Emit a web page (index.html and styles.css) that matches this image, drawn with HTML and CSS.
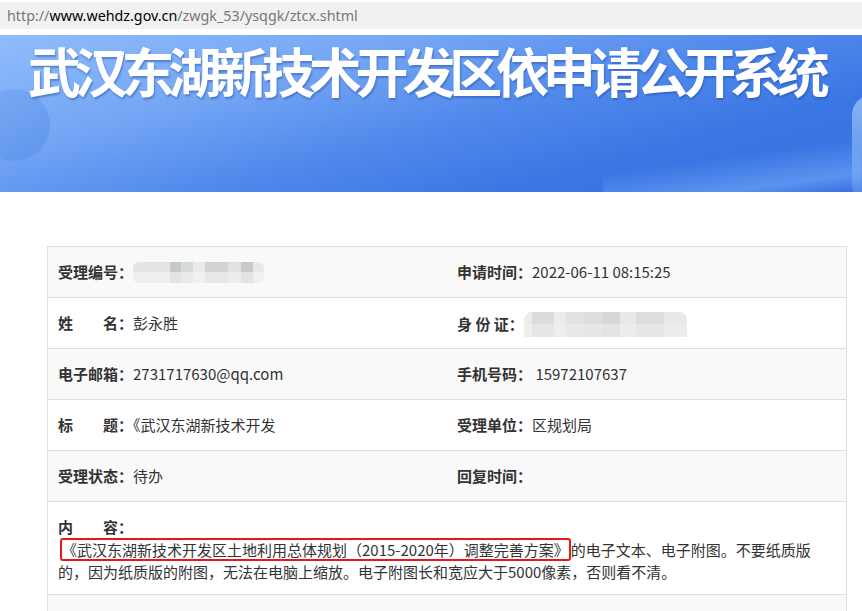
FILE: index.html
```html
<!DOCTYPE html>
<html lang="zh-CN">
<head>
    <meta charset="UTF-8">
    <meta name="viewport" content="width=device-width, initial-scale=1.0">
    <title>依申请公开查询</title>
    <link rel="stylesheet" href="styles.css">
</head>
<body>
    <div class="addr">
        <span class="dim">http://</span>www.wehdz.gov.cn<span class="dim">/zwgk_53/ysqgk/ztcx.shtml</span>
    </div>

    <div class="banner">
        <span class="circle"></span>
        <span class="bubble"></span>
        <h1>武汉东湖新技术开发区依申请公开系统</h1>
    </div>

    <div class="detail">
        <div class="row">
            <div class="cell"><b>受理编号：</b><span class="mosaic m1"></span></div>
            <div class="cell"><b>申请时间：</b>2022-06-11 08:15:25</div>
        </div>
        <div class="row">
            <div class="cell"><b>姓　　名：</b>彭永胜</div>
            <div class="cell"><b>身 份 证：</b><span class="mosaic m2"></span></div>
        </div>
        <div class="row">
            <div class="cell"><b>电子邮箱：</b>2731717630@qq.com</div>
            <div class="cell"><b>手机号码：</b> 15972107637</div>
        </div>
        <div class="row">
            <div class="cell"><b>标　　题：</b>《武汉东湖新技术开发</div>
            <div class="cell"><b>受理单位：</b>区规划局</div>
        </div>
        <div class="row">
            <div class="cell"><b>受理状态：</b>待办</div>
            <div class="cell"><b>回复时间：</b></div>
        </div>
        <div class="row content">
            <div class="cell">
                <b>内　　容：</b><br>
                <span class="mark">《武汉东湖新技术开发区土地利用总体规划（2015-2020年）调整完善方案》</span>的电子文本、电子附图。不要纸质版的，因为纸质版的附图，无法在电脑上缩放。电子附图长和宽应大于5000像素，否则看不清。
            </div>
        </div>
        <div class="row"></div>
    </div>
</body>
</html>
```

FILE: styles.css
```css
body {
    margin: 0;
    font-family: "Noto Sans CJK SC", "Microsoft YaHei", sans-serif;
    font-size: 15px;
    color: #333;
    background-color: white;
}
.addr {
    margin-top: 2px;
    height: 27px;
    line-height: 27px;
    padding-left: 7px;
    background-color: #f1f1f1;
    font-family: "Noto Sans", "Open Sans", sans-serif;
    font-size: 14.3px;
    color: #000;
    white-space: nowrap;
}
.addr .dim {
    color: #777;
}
.banner {
    position: relative;
    overflow: hidden;
    margin-top: 6px;
    height: 157px;
    background:
        linear-gradient(172deg, rgba(255,255,255,0) 72%, rgba(130,180,255,0.5) 90%, rgba(255,255,255,0) 100%) right bottom / 30% 100% no-repeat,
        linear-gradient(165deg, #8fbcfb 0%, #74a6f5 30%, #4f88eb 55%, #3b77e4 75%, #3470df 100%);
}
.banner .circle {
    position: absolute;
    left: -22px;
    top: 54px;
    width: 72px;
    height: 72px;
    border-radius: 50%;
    background: linear-gradient(150deg, #79a9f3, #5e94ec);
    opacity: 0.9;
}
.banner .bubble {
    position: absolute;
    right: -30px;
    top: 60px;
    width: 40px;
    height: 110px;
    border-radius: 20px;
    background: linear-gradient(180deg, rgba(170,205,255,0.7), rgba(120,170,245,0.3));
}
.banner h1 {
    position: relative;
    margin: 0;
    padding: 8px 0 0 28px;
    font-size: 53px;
    line-height: 55px;
    letter-spacing: -6.2px;
    font-weight: 700;
    color: white;
    white-space: nowrap;
    text-shadow: 1px 2px 2px rgba(30, 70, 160, 0.45);
}
.detail {
    margin: 54px 0 0 47px;
    width: 798px;
    border: 1px solid #ddd;
    border-bottom: none;
}
.detail .row {
    display: flex;
    height: 50px;
    border-top: 1px solid #ddd;
}
.detail .row:first-child {
    border-top: none;
}
.detail .row:nth-child(odd) {
    background-color: #f9f9f9;
}
.detail .cell {
    flex: 1;
    padding: 14px 10px;
    line-height: 22px;
    white-space: nowrap;
}
.detail b {
    font-weight: bold;
}
.detail .content {
    height: 92px;
}
.detail .content .cell {
    padding: 14px 10px 12px;
    white-space: normal;
}
.mark {
    display: inline-block;
    line-height: 19px;
    border: 2px solid #e8171b;
    border-radius: 3px;
    margin-left: 2px;
    padding: 0;
}
.mosaic {
    display: inline-block;
    vertical-align: -5px;
    border-radius: 6px;
    filter: blur(0.6px);
}
.m1 {
    width: 131px;
    height: 21px;
    background:
        linear-gradient(rgba(255,255,255,0) 50%, rgba(245,245,245,0.6) 50%),
        linear-gradient(90deg, #e4e4e4 0 37px, #c8c8c8 37px 48px, #d6dbdb 48px 60px, #eaeaea 60px 72px, #d3d3d3 72px 95px, #e2e2e2 95px 108px, #c9c9c9 108px 120px, #e8e8e8 120px);
}
.m2 {
    width: 163px;
    height: 25px;
    vertical-align: -7px;
    border-radius: 8px 8px 0 0;
    background:
        linear-gradient(rgba(255,255,255,0) 50%, rgba(240,240,240,0.5) 50%),
        linear-gradient(90deg, #ececec 0 8px, #dcdcdc 8px 30px, #ebebeb 30px 42px, #e2e2e2 42px 60px, #dedede 60px 78px, #d7d7d7 78px 96px, #e6e8ea 96px 112px, #dddddd 112px 140px, #e9e9e9 140px);
}
```
